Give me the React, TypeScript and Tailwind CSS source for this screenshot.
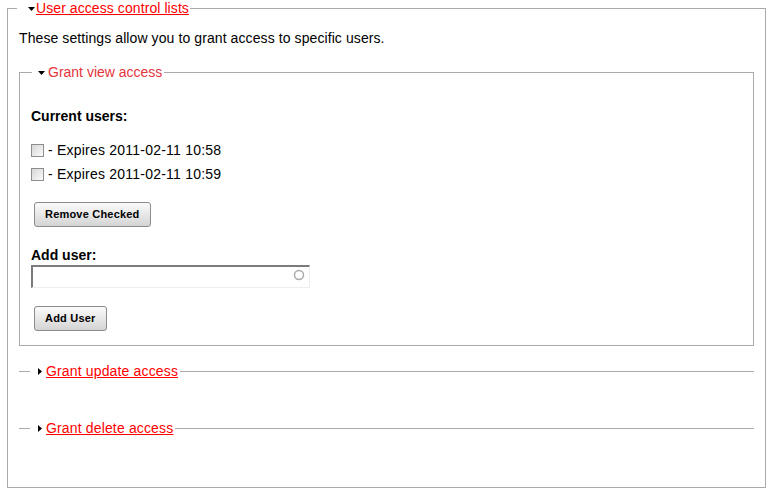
import { ReactNode } from "react";

// small black disclosure arrows used in collapsible legends
const ArrowDown = () => (
  <svg width="7" height="4" viewBox="0 0 7 4" className="shrink-0">
    <path d="M0 0h7L3.5 4z" fill="#000" />
  </svg>
);

const ArrowRight = () => (
  <svg width="4" height="7" viewBox="0 0 4 7" className="shrink-0">
    <path d="M0 0l4 3.5L0 7z" fill="#000" />
  </svg>
);

const Button = ({ children }: { children: ReactNode }) => (
  <button
    type="button"
    className="ml-[3px] h-[25px] self-start rounded-[3px] border border-[#8c8c8c] bg-linear-to-b from-[#fbfbfb] to-[#d4d4d4] px-[10px] text-[11px] font-bold leading-none tracking-[0.2px] text-black"
  >
    {children}
  </button>
);

const UserRow = ({ label }: { label: string }) => (
  <label className="flex items-center leading-[17px] tracking-[0.22px]">
    <input
      type="checkbox"
      className="mr-[4px] size-[13px] appearance-none border border-[#8e8e8e] bg-linear-to-br from-[#d6d6d6] to-[#fbfbfb]"
    />
    - Expires {label}
  </label>
);

// collapsed group: just the legend sitting on a rule
const CollapsedSection = ({ title, className }: { title: string; className: string }) => (
  <div className={`flex h-[17px] items-center ${className}`}>
    <span className="h-px w-[11px] bg-[#aaa]" />
    <span className="ml-[8px] mr-[2px] flex items-center leading-[17px]">
      <ArrowRight />
      <a href="#" className="ml-[4px] tracking-[0.15px] text-[#f00] underline">
        {title}
      </a>
    </span>
    <span className="h-px flex-1 bg-[#aaa]" />
  </div>
);

export default function App() {
  return (
    <div className="min-h-[493px] bg-white px-[7px] font-['Liberation_Sans',Arial,sans-serif] text-[14px] text-black">
      <section>
        <div className="flex h-[17px] items-center">
          <span className="h-[9px] w-[10px] self-end border-t border-l border-[#aaa]" />
          <span className="ml-[11px] mr-[1px] flex items-center leading-[17px]">
            <ArrowDown />
            <a href="#" className="ml-[1px] tracking-[0.08px] text-[#f00] underline">
              User access control lists
            </a>
          </span>
          <span className="h-[9px] flex-1 self-end border-t border-r border-[#aaa]" />
        </div>

        <div className="border-x border-b border-[#aaa] px-[11px] pt-[13px] pb-[50px]">
          <p className="leading-[17px] tracking-[0.09px]">
            These settings allow you to grant access to specific users.
          </p>

          <section className="mt-[17px]">
            <div className="flex h-[17px] items-center">
              <span className="h-[9px] w-[13px] self-end border-t border-l border-[#aaa]" />
              <span className="ml-[6px] mr-[2px] flex items-center leading-[17px]">
                <ArrowDown />
                <span className="ml-[3px] text-[#e4343c]">Grant view access</span>
              </span>
              <span className="h-[9px] flex-1 self-end border-t border-r border-[#aaa]" />
            </div>

            <div className="flex flex-col border-x border-b border-[#aaa] px-[11px] pt-[27px] pb-[14px]">
              <h4 className="font-bold leading-[17px]">Current users:</h4>
              <div className="mt-[17px] flex flex-col gap-[7px]">
                <UserRow label="2011-02-11 10:58" />
                <UserRow label="2011-02-11 10:59" />
              </div>
              <div className="mt-[19px] flex">
                <Button>Remove Checked</Button>
              </div>

              <label className="mt-[20px] font-bold leading-[17px]">Add user:</label>
              <div className="relative mt-[1px] h-[23px] w-[279px]">
                <input
                  type="text"
                  className="h-full w-full border-t-2 border-r border-b border-l-2 border-t-[#7b7b7b] border-r-[#eee] border-b-[#eee] border-l-[#7b7b7b] bg-white px-1 outline-none"
                />
                <svg
                  width="12"
                  height="12"
                  viewBox="0 0 12 12"
                  className="absolute top-[4px] right-[5px]"
                >
                  <circle cx="6" cy="6" r="4.5" fill="none" stroke="#aaa" strokeWidth="1.5" />
                </svg>
              </div>
              <div className="mt-[18px] flex">
                <Button>Add User</Button>
              </div>
            </div>
          </section>

          <CollapsedSection title="Grant update access" className="mt-[17px]" />
          <CollapsedSection title="Grant delete access" className="mt-[40px]" />
        </div>
      </section>
    </div>
  );
}
